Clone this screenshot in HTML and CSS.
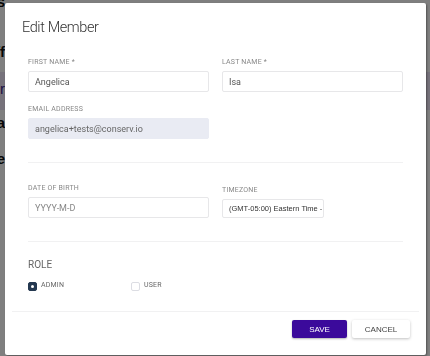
FILE: index.html
```html
<!DOCTYPE html>
<html lang="en">
<head>
    <meta charset="UTF-8">
    <meta name="viewport" content="width=device-width, initial-scale=1.0">
    <title>Edit Member</title>
    <link rel="stylesheet" href="styles.css">
</head>
<body>
    <!-- page behind the dialog, mostly hidden -->
    <div class="page">
        <div class="page-line line-top">Settings</div>
        <div class="page-line line-f">Staff</div>
        <div class="page-band"><span class="page-line">Member</span></div>
        <div class="page-line line-a">Angelica</div>
        <div class="page-line line-e">Role</div>
    </div>
    <div class="overlay"></div>

    <div class="modal">
        <h2 class="modal-title">Edit Member</h2>

        <div class="modal-body">
            <div class="row">
                <div class="field">
                    <label>First name *</label>
                    <input class="input" type="text" value="Angelica">
                </div>
                <div class="field">
                    <label>Last name *</label>
                    <input class="input" type="text" value="Isa">
                </div>
            </div>

            <div class="row row-email">
                <div class="field">
                    <label>Email address</label>
                    <input class="input input-disabled" type="text" value="angelica+tests@conserv.io" disabled>
                </div>
            </div>

            <div class="divider"></div>

            <div class="row">
                <div class="field">
                    <label>Date of birth</label>
                    <input class="input" type="text" placeholder="YYYY-M-D">
                </div>
                <div class="field field-timezone">
                    <label>Timezone</label>
                    <div class="select">(GMT-05:00) Eastern Time - US &amp; Canada</div>
                </div>
            </div>

            <div class="divider divider-role"></div>

            <h3 class="role-title">Role</h3>
            <div class="roles">
                <div class="role">
                    <span class="check checked"></span>
                    <span class="role-label">Admin</span>
                </div>
                <div class="role">
                    <span class="check"></span>
                    <span class="role-label">User</span>
                </div>
            </div>
        </div>

        <div class="modal-footer">
            <button class="btn btn-primary">Save</button>
            <button class="btn btn-default">Cancel</button>
        </div>
    </div>
</body>
</html>
```
FILE: styles.css
```css
body {
    margin: 0;
    background: #fff;
    font-family: Roboto, "Noto Sans", sans-serif;
    overflow: hidden;
}
.page {
    margin-left: -10px;
    font-family: "Liberation Sans", Arial, sans-serif;
    font-weight: bold;
    font-size: 15px;
    color: #111;
}
.page-line {
    display: block;
    width: 15px;
    overflow: hidden;
    direction: rtl;
    white-space: nowrap;
}
.line-top {
    margin-top: -7px;
    height: 17px;
}
.line-f {
    margin-top: 33px;
}
.page-band {
    margin-top: 12px;
    height: 38px;
    padding-top: 8px;
    box-sizing: border-box;
    background: #ece4f7;
    color: #3b1f8a;
    font-weight: normal;
}
.line-a {
    margin-top: 4px;
}
.line-e {
    margin-top: 19px;
}
.overlay {
    position: fixed;
    inset: 0;
    background: rgba(0, 0, 0, 0.5);
}
.modal {
    position: absolute;
    left: 5px;
    top: 3px;
    width: 421px;
    background: #fff;
    border-radius: 2px;
    box-shadow: 1px 1px 2px rgba(0, 0, 0, 0.35);
}
.modal-title {
    margin: 0;
    padding: 15px 17px 0;
    font-size: 14.5px;
    line-height: 20px;
    font-weight: 300;
    letter-spacing: -0.4px;
    color: #333;
}
.modal-body {
    padding: 20px 23px 0;
}
.row {
    display: grid;
    grid-template-columns: 181px 181px;
    column-gap: 13px;
}
.row-email {
    margin-top: 13px;
}
.field label {
    display: block;
    font-size: 7px;
    line-height: 8px;
    letter-spacing: 0.2px;
    text-transform: uppercase;
    color: #888;
    margin-bottom: 5px;
}
.input {
    display: block;
    box-sizing: border-box;
    width: 100%;
    height: 21px;
    margin: 0;
    padding: 0 6px;
    border: 1px solid #e7e7e9;
    border-radius: 2px;
    background: #fff;
    font-family: Roboto, "Noto Sans", sans-serif;
    font-size: 9px;
    color: #555;
    outline: none;
}
.input::placeholder {
    color: #888;
}
.input-disabled {
    background: #e9ebf3;
    border-color: #e9ebf3;
    color: #666;
}
.divider {
    height: 1px;
    background: #f1f1f2;
    margin: 23px 0 21px;
}
.divider-role {
    margin: 23px 0 17px;
}
.field-timezone {
    padding-top: 2px;
}
.select {
    box-sizing: border-box;
    width: 102px;
    height: 19px;
    padding: 0 6px;
    border: 1px solid #e7e7e9;
    border-radius: 2px;
    font-family: "Liberation Sans", Arial, sans-serif;
    font-size: 7.5px;
    line-height: 17px;
    color: #333;
    white-space: nowrap;
    overflow: hidden;
}
.role-title {
    margin: 0;
    font-size: 10px;
    line-height: 12px;
    font-weight: normal;
    text-transform: uppercase;
    color: #666;
}
.roles {
    display: flex;
    margin-top: 11px;
}
.role {
    display: flex;
    align-items: flex-start;
    gap: 4px;
    width: 103px;
}
.check {
    width: 9px;
    height: 9px;
    box-sizing: border-box;
    border: 1px solid #dcdde3;
    border-radius: 2px;
    background: #fff;
}
.check.checked {
    border-color: #243850;
    background: #243850;
    position: relative;
}
.check.checked::after {
    content: "";
    position: absolute;
    left: 2px;
    top: 2px;
    width: 3px;
    height: 3px;
    border-radius: 50%;
    background: #fff;
}
.role-label {
    font-size: 7px;
    line-height: 7px;
    letter-spacing: 0.2px;
    text-transform: uppercase;
    color: #666;
}
.modal-footer {
    display: flex;
    justify-content: flex-end;
    gap: 5px;
    margin: 20px 7px 0;
    padding: 8px 9px 17px;
    border-top: 1px solid #f1f1f2;
}
.btn {
    height: 18px;
    border: none;
    border-radius: 2px;
    font-family: "Liberation Sans", Arial, sans-serif;
    font-size: 8px;
    text-transform: uppercase;
    padding: 0;
}
.btn-primary {
    width: 55px;
    background: #3b0a9b;
    color: #fff;
    box-shadow: 0 1px 2px rgba(0, 0, 0, 0.3);
}
.btn-default {
    width: 58px;
    background: #fff;
    color: #444;
    box-shadow: 0 1px 3px rgba(0, 0, 0, 0.25);
}
```
